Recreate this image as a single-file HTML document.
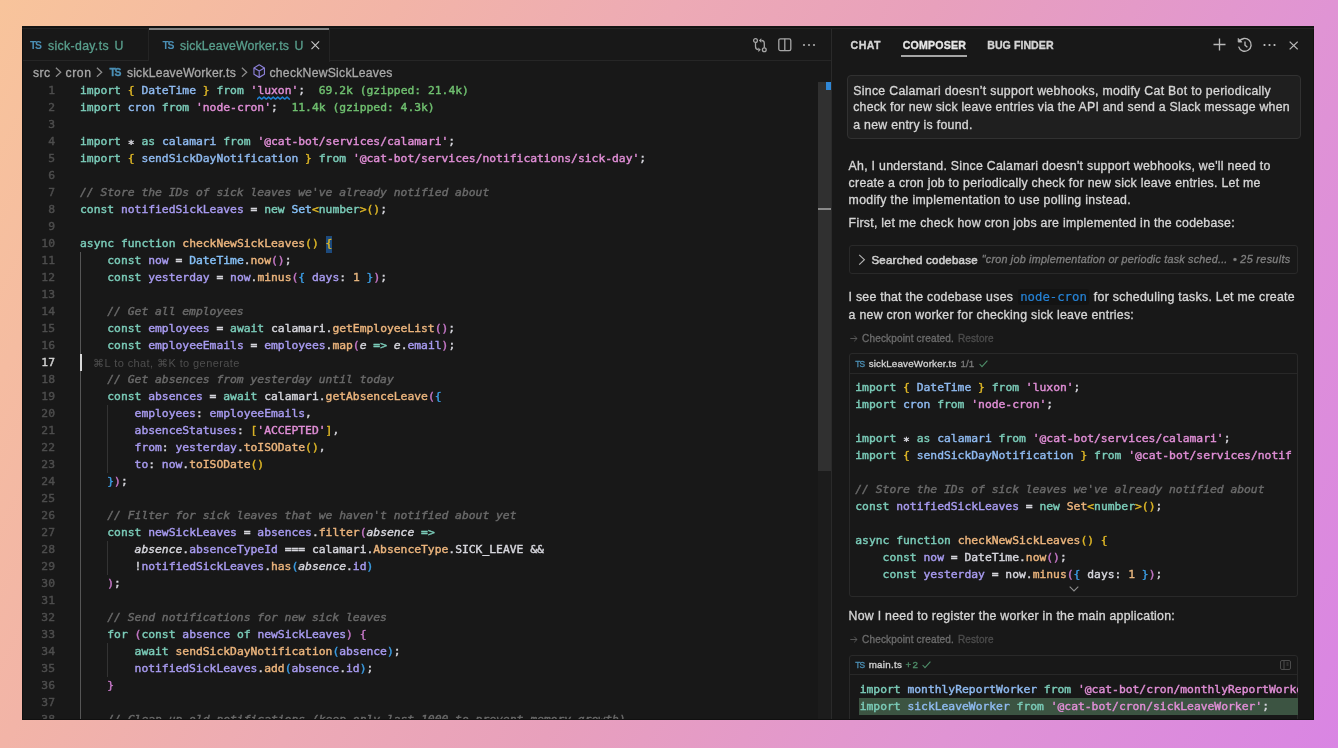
<!DOCTYPE html>
<html lang="en">
<head>
<meta charset="utf-8">
<title>sickLeaveWorker.ts — Cursor</title>
<style>
*{box-sizing:border-box;margin:0;padding:0}
html,body{width:1338px;height:748px;overflow:hidden}
body{position:relative;font-family:"Liberation Sans",sans-serif;
background:linear-gradient(118deg,#f8c49b 0%,#f2b4a7 23%,#edaab5 39%,#e8a0bc 54%,#e094d4 77%,#d985e3 100%);}
.win{position:absolute;left:22px;top:26px;width:1291.6px;height:693.7px;background:#181818;overflow:hidden;filter:blur(0.45px)}
.abs{position:absolute}
.mono{font-family:"DejaVu Sans Mono","Liberation Mono",monospace;-webkit-text-stroke-width:0.42px}
.ast{position:relative;top:2.5px}
/* ---------- editor ---------- */
.tabbar{position:absolute;left:0;top:0;width:809px;height:34px;border-bottom:1px solid #262626}
.tab{position:absolute;top:0;height:34px;font-size:12.27px;color:#599f8d;white-space:nowrap}
.tab .lbl{position:absolute;top:11.5px;line-height:14px;-webkit-text-stroke-width:0.3px}
.tsi{position:absolute;font-size:10.4px;font-weight:bold;color:#4b8fb5;letter-spacing:-1.3px;line-height:10px}
.crumbs{position:absolute;left:0;top:36px;height:18px;width:809px;font-size:12.2px;color:#a9a9a9;white-space:nowrap}
.crumbs span{position:absolute;top:2.9px;line-height:14px;-webkit-text-stroke-width:0.3px}
.code{position:absolute;left:0;top:55px;width:809px;height:640px}
.ln{position:absolute;left:0;width:33px;text-align:right;height:17px;line-height:17px;font-size:11.33px;color:#4d4d4d}
.cl{position:absolute;left:58px;height:17px;line-height:17px;font-size:11.33px;color:#d6d6dd;white-space:pre}
.k{color:#7bccb9}.y{color:#dfb726}.p{color:#c678c8}.b{color:#3b9de4}
.i{color:#8fbaf0}.s{color:#e08ed6}.v{color:#a89bf0}.f{color:#ecb57d}.c{color:#6a6a6a;font-style:italic}
.t{color:#86c0f7}.n{color:#e6b57e}.g{color:#6fbf6f}.w{color:#d6d6dd}.pi{color:#d6d6dd;font-style:italic}
.guide{position:absolute;width:1px;background:#333}
/* ---------- panel ---------- */
.panel{position:absolute;left:809px;top:0;width:483px;height:693px;border-left:1px solid #2a2a2a;background:#181818}
.ptab{position:absolute;top:12.3px;font-size:10.6px;font-weight:bold;line-height:12px;color:#c8c8c8;letter-spacing:0.05px;white-space:nowrap}
.msg{position:absolute;font-size:12.4px;line-height:17px;color:#d4d4d4;white-space:nowrap}
.box{position:absolute;border:1px solid #292929;border-radius:3px}
.pc{position:absolute;height:17px;line-height:17px;font-size:11.33px;color:#d6d6dd;white-space:pre}
.st{position:absolute;white-space:nowrap;-webkit-text-stroke-width:0.32px}
.chk{position:absolute;font-size:9.6px;line-height:12px;color:#6a6a6a;white-space:nowrap}
</style>
</head>
<body>
<div class="win">
<div class="abs" style="left:0;top:1px;width:809px;height:692px">
<div class="tabbar"></div>
<div class="tab" style="left:0;width:127px;border-right:1px solid #242424"><span class="tsi" style="left:8px;top:13.8px">TS</span><span class="lbl" style="left:26px;letter-spacing:0.35px">sick-day.ts</span><span class="lbl" style="left:92.5px">U</span></div>
<div class="tab" style="left:127px;width:180.5px;height:35px;background:#181818;border-right:1px solid #242424"><div class="abs" style="left:0;top:0.9px;width:100%;height:2.1px;background:#808080;z-index:3"></div><span class="tsi" style="left:13.5px;top:13.8px">TS</span><span class="lbl" style="left:31px;letter-spacing:0.16px">sickLeaveWorker.ts</span><span class="lbl" style="left:145.5px">U</span><svg class="abs" style="left:162.2px;top:14.3px" width="8.6" height="8.6" viewBox="0 0 9 9"><path d="M0.5 0.5 L8.5 8.5 M8.5 0.5 L0.5 8.5" stroke="#c8c8c8" stroke-width="1.15" fill="none"/></svg></div>
<svg class="abs" style="left:730.3px;top:10.3px" width="16" height="17" viewBox="0 0 16 17" fill="none" stroke="#a6a6a6" stroke-width="1.3"><circle cx="3.5" cy="3.5" r="1.9"/><circle cx="12.3" cy="12.7" r="1.9"/><path d="M3.5 5.4 V9.6 Q3.5 12.7 6.4 12.7"/><path d="M12.3 10.8 V6.5 Q12.3 3.5 9.4 3.5"/><path d="M6.3 10.5 L8.8 12.7 L6.3 14.9 Z" fill="#a6a6a6" stroke="none"/><path d="M9.3 1.3 L6.8 3.5 L9.3 5.7 Z" fill="#a6a6a6" stroke="none"/></svg>
<svg class="abs" style="left:756.1px;top:11px" width="14" height="14" viewBox="0 0 14 14" fill="none" stroke="#a6a6a6" stroke-width="1.3"><rect x="0.8" y="0.8" width="12" height="11.8" rx="1.6"/><path d="M6.8 0.8 V12.6"/></svg>
<svg class="abs" style="left:780.3px;top:16px" width="14" height="4" viewBox="0 0 14 4" fill="#ababab"><circle cx="2" cy="2" r="1.1"/><circle cx="7" cy="2" r="1.1"/><circle cx="12" cy="2" r="1.1"/></svg>
<div class="crumbs"><span style="left:11px;letter-spacing:0.4px">src</span><svg class="abs" style="left:32.8px;top:3.8px" width="7" height="10.4" viewBox="0 0 7 10.4"><path d="M0.9 0.7 L5.7 5.2 L0.9 9.7" stroke="#8e8e8e" stroke-width="1.25" fill="none"/></svg><span style="left:43.6px;letter-spacing:0.55px">cron</span><svg class="abs" style="left:73.9px;top:3.8px" width="7" height="10.4" viewBox="0 0 7 10.4"><path d="M0.9 0.7 L5.7 5.2 L0.9 9.7" stroke="#8e8e8e" stroke-width="1.25" fill="none"/></svg><span class="tsi" style="left:87.5px;top:2.5px">TS</span><span style="left:104.9px;letter-spacing:0.2px">sickLeaveWorker.ts</span><svg class="abs" style="left:219.4px;top:3.8px" width="7" height="10.4" viewBox="0 0 7 10.4"><path d="M0.9 0.7 L5.7 5.2 L0.9 9.7" stroke="#8e8e8e" stroke-width="1.25" fill="none"/></svg><svg class="abs" style="left:230.6px;top:1.2px" width="12.4" height="14.2" viewBox="0 0 13 14" preserveAspectRatio="none" fill="none" stroke="#8c80d8" stroke-width="1.2" stroke-linejoin="round"><path d="M6.5 0.8 L12 3.9 V10.1 L6.5 13.2 L1 10.1 V3.9 Z"/><path d="M1 3.9 L6.5 7 L12 3.9 M6.5 7 V13.2"/></svg><span style="left:247.5px;letter-spacing:0.25px">checkNewSickLeaves</span></div>
<div class="guide" style="left:58px;top:225.3px;height:467.7px;background:#555"></div>
<div class="guide" style="left:85px;top:378.3px;height:68px"></div>
<div class="guide" style="left:85px;top:514.3px;height:34px"></div>
<div class="guide" style="left:85px;top:616.3px;height:34px"></div>
<div class="abs" style="left:303.5px;top:209.2px;width:6.7px;height:16.6px;background:#1d4a7d"></div>
<div class="ln mono" style="top:55.3px">1</div>
<div class="cl mono" style="top:55.3px"><span class="k">import</span> <span class="y">{</span> <span class="i">DateTime</span> <span class="y">}</span> <span class="k">from</span> <span class="s">'</span><span class="s sq">luxon</span><span class="s">'</span>;  <span class="g">69.2k (gzipped: 21.4k)</span></div>
<div class="ln mono" style="top:72.3px">2</div>
<div class="cl mono" style="top:72.3px"><span class="k">import</span> <span class="i">cron</span> <span class="k">from</span> <span class="s">'node-cron'</span>;  <span class="g">11.4k (gzipped: 4.3k)</span></div>
<div class="ln mono" style="top:89.3px">3</div>
<div class="ln mono" style="top:106.30000000000001px">4</div>
<div class="cl mono" style="top:106.30000000000001px"><span class="k">import</span> <span class="ast">*</span> <span class="k">as</span> <span class="i">calamari</span> <span class="k">from</span> <span class="s">'@cat-bot/services/calamari'</span>;</div>
<div class="ln mono" style="top:123.30000000000001px">5</div>
<div class="cl mono" style="top:123.30000000000001px"><span class="k">import</span> <span class="y">{</span> <span class="i">sendSickDayNotification</span> <span class="y">}</span> <span class="k">from</span> <span class="s">'@cat-bot/services/notifications/sick-day'</span>;</div>
<div class="ln mono" style="top:140.3px">6</div>
<div class="ln mono" style="top:157.3px">7</div>
<div class="cl mono" style="top:157.3px"><span class="c">// Store the IDs of sick leaves we've already notified about</span></div>
<div class="ln mono" style="top:174.3px">8</div>
<div class="cl mono" style="top:174.3px"><span class="k">const</span> <span class="v">notifiedSickLeaves</span> = <span class="k">new</span> <span class="t">Set</span><span class="y">&lt;</span><span class="k">number</span><span class="y">&gt;</span><span class="y">()</span>;</div>
<div class="ln mono" style="top:191.3px">9</div>
<div class="ln mono" style="top:208.3px">10</div>
<div class="cl mono" style="top:208.3px"><span class="k">async</span> <span class="k">function</span> <span class="f">checkNewSickLeaves</span><span class="y">()</span> <span class="y bm">{</span></div>
<div class="ln mono" style="top:225.3px">11</div>
<div class="cl mono" style="top:225.3px">    <span class="k">const</span> <span class="v">now</span> = <span class="t">DateTime</span>.<span class="f">now</span><span class="p">()</span>;</div>
<div class="ln mono" style="top:242.3px">12</div>
<div class="cl mono" style="top:242.3px">    <span class="k">const</span> <span class="v">yesterday</span> = <span class="v">now</span>.<span class="f">minus</span><span class="p">(</span><span class="b">{</span> <span class="v">days</span>: <span class="n">1</span> <span class="b">}</span><span class="p">)</span>;</div>
<div class="ln mono" style="top:259.3px">13</div>
<div class="ln mono" style="top:276.3px">14</div>
<div class="cl mono" style="top:276.3px">    <span class="c">// Get all employees</span></div>
<div class="ln mono" style="top:293.3px">15</div>
<div class="cl mono" style="top:293.3px">    <span class="k">const</span> <span class="v">employees</span> = <span class="k">await</span> calamari.<span class="f">getEmployeeList</span><span class="p">()</span>;</div>
<div class="ln mono" style="top:310.3px">16</div>
<div class="cl mono" style="top:310.3px">    <span class="k">const</span> <span class="v">employeeEmails</span> = <span class="v">employees</span>.<span class="f">map</span><span class="p">(</span><span class="pi">e</span> <span class="k">=&gt;</span> <span class="pi">e</span>.<span class="v">email</span><span class="p">)</span>;</div>
<div class="ln mono" style="top:327.3px;color:#d0d0d0">17</div>
<div class="ln mono" style="top:344.3px">18</div>
<div class="cl mono" style="top:344.3px">    <span class="c">// Get absences from yesterday until today</span></div>
<div class="ln mono" style="top:361.3px">19</div>
<div class="cl mono" style="top:361.3px">    <span class="k">const</span> <span class="v">absences</span> = <span class="k">await</span> calamari.<span class="f">getAbsenceLeave</span><span class="p">(</span><span class="b">{</span></div>
<div class="ln mono" style="top:378.3px">20</div>
<div class="cl mono" style="top:378.3px">        <span class="v">employees</span>: <span class="v">employeeEmails</span>,</div>
<div class="ln mono" style="top:395.3px">21</div>
<div class="cl mono" style="top:395.3px">        <span class="v">absenceStatuses</span>: <span class="y">[</span><span class="s">'ACCEPTED'</span><span class="y">]</span>,</div>
<div class="ln mono" style="top:412.3px">22</div>
<div class="cl mono" style="top:412.3px">        <span class="v">from</span>: <span class="v">yesterday</span>.<span class="f">toISODate</span><span class="y">()</span>,</div>
<div class="ln mono" style="top:429.3px">23</div>
<div class="cl mono" style="top:429.3px">        <span class="v">to</span>: <span class="v">now</span>.<span class="f">toISODate</span><span class="y">()</span></div>
<div class="ln mono" style="top:446.3px">24</div>
<div class="cl mono" style="top:446.3px">    <span class="b">}</span><span class="p">)</span>;</div>
<div class="ln mono" style="top:463.3px">25</div>
<div class="ln mono" style="top:480.3px">26</div>
<div class="cl mono" style="top:480.3px">    <span class="c">// Filter for sick leaves that we haven't notified about yet</span></div>
<div class="ln mono" style="top:497.29999999999995px">27</div>
<div class="cl mono" style="top:497.29999999999995px">    <span class="k">const</span> <span class="v">newSickLeaves</span> = <span class="v">absences</span>.<span class="f">filter</span><span class="p">(</span><span class="pi">absence</span> <span class="k">=&gt;</span></div>
<div class="ln mono" style="top:514.3px">28</div>
<div class="cl mono" style="top:514.3px">        <span class="pi">absence</span>.<span class="v">absenceTypeId</span> === calamari.<span class="f">AbsenceType</span>.SICK_LEAVE &amp;&amp;</div>
<div class="ln mono" style="top:531.3px">29</div>
<div class="cl mono" style="top:531.3px">        !<span class="v">notifiedSickLeaves</span>.<span class="f">has</span><span class="b">(</span><span class="pi">absence</span>.<span class="v">id</span><span class="b">)</span></div>
<div class="ln mono" style="top:548.3px">30</div>
<div class="cl mono" style="top:548.3px">    <span class="p">)</span>;</div>
<div class="ln mono" style="top:565.3px">31</div>
<div class="ln mono" style="top:582.3px">32</div>
<div class="cl mono" style="top:582.3px">    <span class="c">// Send notifications for new sick leaves</span></div>
<div class="ln mono" style="top:599.3px">33</div>
<div class="cl mono" style="top:599.3px">    <span class="k">for</span> <span class="p">(</span><span class="k">const</span> <span class="v">absence</span> <span class="k">of</span> <span class="v">newSickLeaves</span><span class="p">)</span> <span class="p">{</span></div>
<div class="ln mono" style="top:616.3px">34</div>
<div class="cl mono" style="top:616.3px">        <span class="k">await</span> <span class="f">sendSickDayNotification</span><span class="b">(</span><span class="v">absence</span><span class="b">)</span>;</div>
<div class="ln mono" style="top:633.3px">35</div>
<div class="cl mono" style="top:633.3px">        <span class="v">notifiedSickLeaves</span>.<span class="f">add</span><span class="b">(</span><span class="v">absence</span>.<span class="v">id</span><span class="b">)</span>;</div>
<div class="ln mono" style="top:650.3px">36</div>
<div class="cl mono" style="top:650.3px">    <span class="p">}</span></div>
<div class="ln mono" style="top:667.3px">37</div>
<div class="ln mono" style="top:684.3px">38</div>
<div class="cl mono" style="top:684.3px">    <span class="c">// Clean up old notifications (keep only last 1000 to prevent memory growth)</span></div>
<svg class="abs" style="left:235px;top:68.8px" width="36" height="4.2" viewBox="0 0 36 4.2"><path d="M0 3.1 L2.31 1.1 L4.63 3.1 L6.95 1.1 L9.26 3.1 L11.57 1.1 L13.89 3.1 L16.2 1.1 L18.52 3.1 L20.84 1.1 L23.15 3.1 L25.47 1.1 L27.78 3.1 L30.1 1.1 L32.41 3.1" stroke="#1f80d2" stroke-width="1.5" fill="none" stroke-linejoin="round" stroke-linecap="round"/></svg>
<div class="abs" style="left:58px;top:327.3px;width:2px;height:17px;background:#d8d8d8"></div>
<div class="abs hint" style="left:71.2px;top:327.90000000000003px;line-height:17px;font-size:11px;letter-spacing:0.41px;color:#4e4e4e;white-space:nowrap">⌘L to chat, ⌘K to generate</div>
<div class="abs" style="left:795.5px;top:55px;width:13.5px;height:389px;background:#303030"></div>
<div class="abs" style="left:796px;top:444px;width:13px;height:249px;background:#1c1c1c"></div>
<div class="abs" style="left:804.4px;top:55px;width:4.6px;height:8px;background:#2f87d6"></div>
<div class="abs" style="left:796px;top:181px;width:13px;height:2px;background:#8a8a8a"></div>
</div>
<div class="panel">
<div class="st" style="left:18.6px;top:11.91px;font-size:10.6px;line-height:14.84px;letter-spacing:0.453px;font-weight:bold;color:#d4d4d4">CHAT</div>
<div class="st" style="left:70.8px;top:11.91px;font-size:10.6px;line-height:14.84px;letter-spacing:0.17px;font-weight:bold;color:#e6e6e6">COMPOSER</div>
<div class="abs" style="left:69.3px;top:29px;width:65.7px;height:1.6px;background:#a6a6a6"></div>
<div class="st" style="left:155.2px;top:11.91px;font-size:10.6px;line-height:14.84px;letter-spacing:0.053px;font-weight:bold;color:#d4d4d4">BUG FINDER</div>
<svg class="abs" style="left:381px;top:12px" width="13" height="13" viewBox="0 0 13 13"><path d="M6.5 0.5 V12.5 M0.5 6.5 H12.5" stroke="#b8b8b8" stroke-width="1.35" fill="none"/></svg>
<svg class="abs" style="left:404.5px;top:11px" width="16" height="16" viewBox="0 0 16 16" fill="none" stroke="#b8b8b8" stroke-width="1.35"><path d="M2.2 4.6 A6.4 6.4 0 1 1 1.6 9.6"/><path d="M1.2 1.4 V5.1 H4.9 Z" fill="#b8b8b8" stroke-width="0.8"/><path d="M8 4.4 V8.2 L10.4 10.2"/></svg>
<svg class="abs" style="left:431px;top:17px" width="13" height="4" viewBox="0 0 13 4" fill="#c4c4c4"><circle cx="1.5" cy="2" r="1.1"/><circle cx="6.5" cy="2" r="1.1"/><circle cx="11.5" cy="2" r="1.1"/></svg>
<svg class="abs" style="left:457px;top:14.9px" width="9.4" height="9" viewBox="0 0 10 10" preserveAspectRatio="none"><path d="M0.7 0.7 L9.3 9.3 M9.3 0.7 L0.7 9.3" stroke="#b8b8b8" stroke-width="1.35" fill="none"/></svg>
<div class="box" style="left:15px;top:48.7px;width:454px;height:64px;background:#1f1f1f;border-color:#313131;border-radius:4px"></div>
<div class="st" style="left:21.2px;top:56.63px;font-size:12.3px;line-height:17.22px;letter-spacing:0.312px;color:#d6d6d6">Since Calamari doesn’t support webhooks, modify Cat Bot to periodically</div>
<div class="st" style="left:21.2px;top:73.43px;font-size:12.3px;line-height:17.22px;letter-spacing:0.229px;color:#d6d6d6">check for new sick leave entries via the API and send a Slack message when</div>
<div class="st" style="left:21.2px;top:90.63px;font-size:12.3px;line-height:17.22px;letter-spacing:0.286px;color:#d6d6d6">a new entry is found.</div>
<div class="st" style="left:16.6px;top:131.73px;font-size:12.3px;line-height:17.22px;letter-spacing:0.289px;color:#d6d6d6">Ah, I understand. Since Calamari doesn't support webhooks, we'll need to</div>
<div class="st" style="left:16.6px;top:149.13px;font-size:12.3px;line-height:17.22px;letter-spacing:0.276px;color:#d6d6d6">create a cron job to periodically check for new sick leave entries. Let me</div>
<div class="st" style="left:16.6px;top:166.43px;font-size:12.3px;line-height:17.22px;letter-spacing:0.337px;color:#d6d6d6">modify the implementation to use polling instead.</div>
<div class="st" style="left:16.6px;top:189.23px;font-size:12.3px;line-height:17.22px;letter-spacing:0.281px;color:#d6d6d6">First, let me check how cron jobs are implemented in the codebase:</div>
<div class="box" style="left:16.5px;top:218.6px;width:449.9px;height:29.8px;border-radius:3px"></div>
<svg class="abs" style="left:26px;top:227.9px" width="8" height="11.4" viewBox="0 0 8 11.4"><path d="M1.2 0.8 L6.4 5.7 L1.2 10.6" stroke="#b4b4b4" stroke-width="1.15" fill="none"/></svg>
<div class="st" style="left:39.4px;top:225.57px;font-size:11.5px;line-height:16.1px;letter-spacing:0.243px;color:#cdcdcd;-webkit-text-stroke-width:0.55px">Searched codebase</div>
<div class="st" style="left:149.8px;top:225.7px;font-size:10.8px;line-height:15.12px;letter-spacing:0.206px;color:#7f7f7f;font-style:italic">"cron job implementation or periodic task sched...</div>
<div class="st" style="left:400.9px;top:225.7px;font-size:10.8px;line-height:15.12px;letter-spacing:0.337px;color:#7f7f7f;font-style:italic">• 25 results</div>
<div class="st" style="left:16.6px;top:263.23px;font-size:12.3px;line-height:17.22px;letter-spacing:0.261px;color:#d6d6d6">I see that the codebase uses</div>
<div class="abs mono" style="left:186px;top:262.5px;width:71px;height:16.5px;line-height:16.5px;font-size:12.3px;color:#2683d6;background:#131313;border-radius:3px;padding-left:2.2px;-webkit-text-stroke-width:0.2px">node-cron</div>
<div class="st" style="left:261.8px;top:263.23px;font-size:12.3px;line-height:17.22px;letter-spacing:0.297px;color:#d6d6d6">for scheduling tasks. Let me create</div>
<div class="st" style="left:16.6px;top:281.03px;font-size:12.3px;line-height:17.22px;letter-spacing:0.283px;color:#d6d6d6">a new cron worker for checking sick leave entries:</div>
<svg class="abs" style="left:18px;top:308.6px" width="8" height="7" viewBox="0 0 8 7"><path d="M0.3 3.5 H7 M4.2 0.7 L7 3.5 L4.2 6.3" stroke="#5e5e5e" stroke-width="0.9" fill="none"/></svg>
<div class="st" style="left:30.1px;top:305.94px;font-size:10px;line-height:14.0px;letter-spacing:0.153px;color:#6c6c6c">Checkpoint created.</div>
<div class="st" style="left:126.0px;top:305.94px;font-size:10px;line-height:14.0px;letter-spacing:0.081px;color:#4c4c4c">Restore</div>
<div class="box" style="left:16.5px;top:326.7px;width:449.9px;height:244.3px;border-radius:3px"></div>
<div class="abs" style="left:17.5px;top:347px;width:447.9px;height:1px;background:#282828"></div>
<span class="tsi" style="left:23.3px;top:332.8px;font-size:8.4px;letter-spacing:-1px;font-weight:normal;-webkit-text-stroke-width:0.3px">TS</span>
<div class="st" style="left:36.7px;top:330.84px;font-size:9.8px;line-height:13.72px;letter-spacing:0.173px;color:#d2d2d2">sickLeaveWorker.ts</div>
<div class="st" style="left:128.4px;top:330.84px;font-size:9.8px;line-height:13.72px;letter-spacing:0.138px;color:#7a7a7a">1/1</div>
<svg class="abs" style="left:147.2px;top:334px" width="9" height="7.5" viewBox="0 0 9 7.5"><path d="M0.6 4 L3 6.6 L8.4 0.6" stroke="#4f8f6a" stroke-width="1.05" fill="none"/></svg>
<div class="pc mono" style="left:23.3px;top:353.3px"><span class="k">import</span> <span class="y">{</span> <span class="i">DateTime</span> <span class="y">}</span> <span class="k">from</span> <span class="s">'luxon'</span>;</div>
<div class="pc mono" style="left:23.3px;top:370.3px"><span class="k">import</span> <span class="i">cron</span> <span class="k">from</span> <span class="s">'node-cron'</span>;</div>
<div class="pc mono" style="left:23.3px;top:404.3px"><span class="k">import</span> <span class="ast">*</span> <span class="k">as</span> <span class="i">calamari</span> <span class="k">from</span> <span class="s">'@cat-bot/services/calamari'</span>;</div>
<div class="pc mono" style="left:23.3px;top:421.3px"><span class="k">import</span> <span class="y">{</span> <span class="i">sendSickDayNotification</span> <span class="y">}</span> <span class="k">from</span> <span class="s">'@cat-bot/services/notif</span></div>
<div class="pc mono" style="left:23.3px;top:455.3px"><span class="c">// Store the IDs of sick leaves we've already notified about</span></div>
<div class="pc mono" style="left:23.3px;top:472.3px"><span class="k">const</span> <span class="v">notifiedSickLeaves</span> = <span class="k">new</span> <span class="f">Set</span><span class="y">&lt;</span><span class="k">number</span><span class="y">&gt;</span><span class="y">()</span>;</div>
<div class="pc mono" style="left:23.3px;top:506.3px"><span class="k">async</span> <span class="k">function</span> <span class="f">checkNewSickLeaves</span><span class="y">()</span> <span class="y">{</span></div>
<div class="pc mono" style="left:23.3px;top:523.3px">    <span class="k">const</span> <span class="v">now</span> = DateTime.<span class="f">now</span><span class="p">()</span>;</div>
<div class="pc mono" style="left:23.3px;top:540.3px">    <span class="k">const</span> <span class="v">yesterday</span> = now.<span class="f">minus</span><span class="p">(</span><span class="b">{</span> days: <span class="n">1</span> <span class="b">}</span><span class="p">)</span>;</div>
<svg class="abs" style="left:236.6px;top:560px" width="10" height="6" viewBox="0 0 10 6"><path d="M0.7 0.7 L5 5 L9.3 0.7" stroke="#8e8e8e" stroke-width="1.1" fill="none"/></svg>
<div class="st" style="left:16.6px;top:582.03px;font-size:12.3px;line-height:17.22px;letter-spacing:0.278px;color:#d6d6d6">Now I need to register the worker in the main application:</div>
<svg class="abs" style="left:18px;top:610px" width="8" height="7" viewBox="0 0 8 7"><path d="M0.3 3.5 H7 M4.2 0.7 L7 3.5 L4.2 6.3" stroke="#5e5e5e" stroke-width="0.9" fill="none"/></svg>
<div class="st" style="left:30.1px;top:607.33px;font-size:10px;line-height:14.0px;letter-spacing:0.153px;color:#6c6c6c">Checkpoint created.</div>
<div class="st" style="left:126.0px;top:607.33px;font-size:10px;line-height:14.0px;letter-spacing:0.081px;color:#4c4c4c">Restore</div>
<div class="box" style="left:16.5px;top:628.6px;width:449.9px;height:80px;border-radius:3px"></div>
<div class="abs" style="left:17.5px;top:648.2px;width:447.9px;height:1px;background:#282828"></div>
<span class="tsi" style="left:23.3px;top:633.9px;font-size:8.4px;letter-spacing:-1px;font-weight:normal;-webkit-text-stroke-width:0.3px">TS</span>
<div class="st" style="left:36.7px;top:631.94px;font-size:9.8px;line-height:13.72px;letter-spacing:0.27px;color:#d2d2d2">main.ts</div>
<div class="st" style="left:73.4px;top:631.94px;font-size:9.8px;line-height:13.72px;letter-spacing:1.428px;color:#4f8f6a">+2</div>
<svg class="abs" style="left:90px;top:635px" width="9" height="7.5" viewBox="0 0 9 7.5"><path d="M0.6 4 L3 6.6 L8.4 0.6" stroke="#4f8f6a" stroke-width="1.05" fill="none"/></svg>
<svg class="abs" style="left:447.5px;top:633.5px" width="11" height="10" viewBox="0 0 11 10" fill="none" stroke="#4c4c4c" stroke-width="1"><rect x="0.5" y="0.5" width="10" height="9" rx="1.5"/><path d="M4 0.5 V9.5 M6.5 3 H8.5 M6.5 5 H8.5"/></svg>
<div class="abs" style="left:26.9px;top:671.6px;width:438.7px;height:17.1px;background:#3c5442"></div>
<div class="pc mono" style="left:27.7px;top:655.3px;width:437.9px;overflow:hidden"><span class="k">import</span> <span class="i">monthlyReportWorker</span> <span class="k">from</span> <span class="s">'@cat-bot/cron/monthlyReportWorker';</span></div>
<div class="pc mono" style="left:27.7px;top:672.3px"><span class="k">import</span> <span class="i">sickLeaveWorker</span> <span class="k">from</span> <span class="s">'@cat-bot/cron/sickLeaveWorker'</span>;</div>
</div>
<div class="abs" style="left:0;top:0;width:1291.6px;height:693.7px;box-shadow:inset 0 0 0 1px #101010;pointer-events:none"></div>
<div class="abs" style="left:0;top:0;width:1292px;height:1.8px;background:#131313"></div>
<div class="abs" style="left:0;top:1.8px;width:1292px;height:1px;background:#232323"></div>
</div>
</body>
</html>
